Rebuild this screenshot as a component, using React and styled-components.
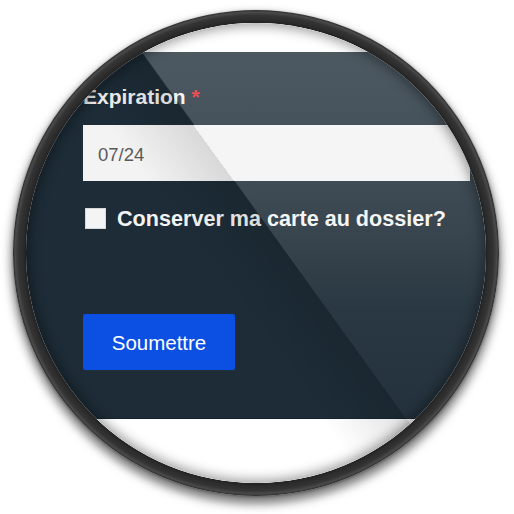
import React from 'react'
import styled, { createGlobalStyle } from 'styled-components'

const GlobalStyle = createGlobalStyle`
  html, body {
    margin: 0;
    padding: 0;
    background: #ffffff;
  }
  body {
    font-family: "Liberation Sans", Arial, sans-serif;
  }
`

const Stage = styled.div`
  width: 514px;
  height: 514px;
  box-sizing: border-box;
  padding: 10px 13px;
  background: #ffffff;
`

// the magnifier: ring drawn by the background, content sits in the viewport
const Lens = styled.div`
  width: 486px;
  height: 486px;
  box-sizing: border-box;
  padding: 13px;
  border-radius: 50%;
  background: radial-gradient(
    circle closest-side,
    #202020 94.4%,
    #2c2c2c 96%,
    #343434 97.8%,
    #4a4a4a 99.1%,
    #2a2a2a 100%
  );
  box-shadow: 0 6px 10px 2px rgba(0, 0, 0, 0.5), 0 1px 3px rgba(0, 0, 0, 0.35);
`

const Viewport = styled.div`
  position: relative;
  width: 460px;
  height: 460px;
  border-radius: 50%;
  overflow: hidden;
  background: #ffffff;
`

const Page = styled.div`
  display: flex;
  flex-direction: column;
  height: 100%;
`

const TopStrip = styled.div`
  height: 29px;
  flex: none;
  background: #ffffff;
`

const Panel = styled.div`
  flex: none;
  height: 366px;
  box-sizing: border-box;
  padding: 33px 0 0 57px;
  background: #1d2c37;
  display: flex;
  flex-direction: column;
  align-items: flex-start;
`

const Label = styled.label`
  font-size: 21px;
  line-height: 24px;
  font-weight: 700;
  color: #f2f2f2;
  white-space: nowrap;
`

const Required = styled.span`
  color: #e4222b;
`

const Field = styled.div`
  margin-top: 16px;
  width: 387px;
  height: 56px;
  box-sizing: border-box;
  padding: 3px 0 0 15px;
  display: flex;
  align-items: center;
  background: #f3f3f3;
  color: #5a5a5a;
  font-size: 18.5px;
  font-weight: 400;
`

const CheckRow = styled.div`
  margin-top: 23px;
  padding-left: 2px;
  display: flex;
  align-items: center;
  gap: 11px;
`

const Box = styled.span`
  width: 21px;
  height: 21px;
  box-sizing: border-box;
  background: #f4f4f4;
  border: 1px solid #d8d8d8;
`

const CheckText = styled.span`
  font-size: 21.6px;
  line-height: 26px;
  font-weight: 700;
  color: #f4f4f4;
  white-space: nowrap;
  padding-top: 2px;
`

const Submit = styled.button`
  margin-top: 82px;
  width: 152px;
  height: 56px;
  padding: 1px 0 0;
  border: none;
  border-radius: 2px;
  background: #0b50e3;
  color: #ffffff;
  font-family: "Liberation Sans", Arial, sans-serif;
  font-size: 20.5px;
  font-weight: 400;
`

const BottomStrip = styled.div`
  flex: 1;
  background: #ffffff;
  border-top: 1px solid #16242e;
`

// reflections on the glass
const Glare = styled.div`
  position: absolute;
  inset: 0;
  pointer-events: none;
  clip-path: polygon(95px 0, 100% 0, 100% 100%, 426px 100%);
  background: linear-gradient(
    to bottom,
    rgba(255, 255, 255, 0.22) 0%,
    rgba(255, 255, 255, 0.2) 15%,
    rgba(255, 255, 255, 0.12) 45%,
    rgba(255, 255, 255, 0.06) 62%,
    rgba(255, 255, 255, 0.02) 90%
  );
`

const Shade = styled.div`
  position: absolute;
  inset: 0;
  pointer-events: none;
  background: linear-gradient(
    54deg,
    rgba(0, 0, 0, 0) 43%,
    rgba(0, 0, 0, 0.11) 53.8%,
    rgba(0, 0, 0, 0) 53.8%
  );
`

const Vignette = styled.div`
  position: absolute;
  inset: 0;
  border-radius: 50%;
  pointer-events: none;
  box-shadow: inset 0 0 12px 3px rgba(0, 0, 0, 0.38);
`

export default function App() {
  return (
    <Stage>
      <GlobalStyle />
      <Lens>
        <Viewport>
          <Page>
            <TopStrip />
            <Panel>
              <Label>
                Expiration <Required>*</Required>
              </Label>
              <Field>07/24</Field>
              <CheckRow>
                <Box />
                <CheckText>Conserver ma carte au dossier?</CheckText>
              </CheckRow>
              <Submit type="button">Soumettre</Submit>
            </Panel>
            <BottomStrip />
          </Page>
          <Shade />
          <Glare />
          <Vignette />
        </Viewport>
      </Lens>
    </Stage>
  )
}
